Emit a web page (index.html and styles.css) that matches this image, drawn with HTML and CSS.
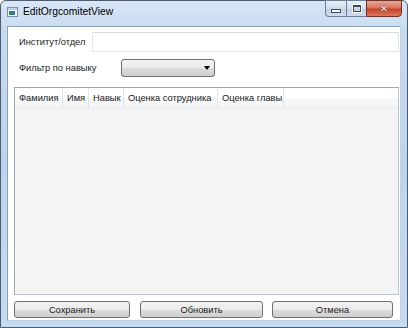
FILE: index.html
```html
<!DOCTYPE html>
<html>
<head>
<meta charset="utf-8">
<link rel="stylesheet" href="styles.css">
</head>
<body>
<div class="window">
  <div class="titlebar">
    <div class="app-icon">
      <svg width="11" height="10" viewBox="0 0 11 10">
        <rect x="0.5" y="0.5" width="10" height="9" fill="#f4f7fb" stroke="#7d8ea6"/>
        <rect x="1" y="1" width="9" height="2" fill="#bcd0ea"/>
        <rect x="2" y="4" width="3" height="4" fill="#2e8a56"/>
        <rect x="5" y="4" width="3" height="4" fill="#3b6fc0"/>
      </svg>
    </div>
    <div class="title">EditOrgcomitetView</div>
    <div class="caption-buttons">
      <div class="cbtn cmin"><span class="min-glyph"></span></div>
      <div class="cbtn cmax"><span class="max-glyph"></span></div>
      <div class="cbtn cclose"><span class="close-glyph">✕</span></div>
    </div>
  </div>
  <div class="client">
    <div class="row row-inst">
      <div class="label">Институт/отдел</div>
      <div class="textbox"></div>
    </div>
    <div class="row row-filter">
      <div class="label">Фильтр по навыку</div>
      <div class="combo"><span class="arrow"></span></div>
    </div>
    <div class="listview">
      <div class="header">
        <div class="col c1">Фамилия</div>
        <div class="col c2">Имя</div>
        <div class="col c3">Навык</div>
        <div class="col c4">Оценка сотрудника</div>
        <div class="col c5">Оценка главы</div>
        <div class="col cfill"></div>
      </div>
      <div class="list-body"></div>
    </div>
    <div class="buttons">
      <div class="btn b1">Сохранить</div>
      <div class="btn b2">Обновить</div>
      <div class="btn b3">Отмена</div>
    </div>
  </div>
</div>
</body>
</html>
```
FILE: styles.css
```css
html, body {
  margin: 0;
  padding: 0;
  width: 408px;
  height: 328px;
  overflow: hidden;
  background: #ffffff;
}
body {
  font-family: "Liberation Sans", Arial, sans-serif;
  font-size: 9.3px;
  color: #1a1a1a;
}
.window {
  width: 408px;
  height: 328px;
  box-sizing: border-box;
  border: 1px solid #4d5c6e;
  border-radius: 6px 6px 0 0;
  background: linear-gradient(180deg, #d9e7f6 0%, #c6daf0 10%, #bed4ee 50%, #c6daf1 100%);
  display: flex;
  flex-direction: column;
  padding: 0 6px 6px 6px;
}
.titlebar {
  height: 25px;
  display: flex;
  align-items: flex-start;
  position: relative;
}
.app-icon {
  margin-top: 6px;
  width: 11px;
  height: 10px;
}
.app-icon svg { display: block; }
.title {
  margin-left: 5px;
  margin-top: 5px;
  font-size: 10.3px;
  color: #000;
}
.caption-buttons {
  position: absolute;
  top: -1px;
  right: -1px;
  display: flex;
  height: 18px;
}
.cbtn {
  height: 17px;
  box-sizing: border-box;
  border: 1px solid #6f7f95;
  display: flex;
  align-items: center;
  justify-content: center;
}
.cmin {
  width: 21px;
  border-radius: 0 0 0 4px;
  background: linear-gradient(180deg, #e8eff8 0%, #d0dcec 50%, #bfcfe3 51%, #cfdcec 100%);
  border-right: none;
}
.cmax {
  width: 20px;
  background: linear-gradient(180deg, #e8eff8 0%, #d0dcec 50%, #bfcfe3 51%, #cfdcec 100%);
  border-right: none;
}
.cclose {
  width: 36px;
  border-radius: 0 0 4px 0;
  background: linear-gradient(180deg, #e9a99a 0%, #d8735e 45%, #c7442b 55%, #d8785e 100%);
  border-color: #6a3428;
}
.min-glyph {
  width: 8px;
  height: 2px;
  margin-top: 5px;
  background: #fff;
  border: 1px solid #3b4a5f;
}
.max-glyph {
  width: 6px;
  height: 4px;
  background: transparent;
  border: 1px solid #3b4a5f;
  border-top-width: 2px;
  box-shadow: 0 0 0 1px #fff;
}
.close-glyph {
  color: #fff;
  font-family: "DejaVu Sans", sans-serif;
  font-weight: bold;
  font-size: 10px;
  line-height: 10px;
  text-shadow: 0 0 1px #5a1a10, 0 0 1px #5a1a10;
}
.client {
  flex: 1;
  background: #ffffff;
  border: 1px solid #8899aa;
  border-color: #8fa1b7 #c3d1e2 #c3d1e2 #8fa1b7;
  display: flex;
  flex-direction: column;
}
.row {
  display: flex;
  align-items: center;
}
.label {
  padding-left: 11px;
  white-space: nowrap;
  flex-shrink: 0;
}
.row-inst {
  margin-top: 5px;
  height: 20px;
}
.row-inst .label { width: 73px; }
.textbox {
  flex: 1;
  height: 20px;
  box-sizing: border-box;
  border: 1px solid #e3e6ea;
  border-top-color: #d9dde3;
  border-radius: 1px;
  margin-right: 1px;
  background: #fff;
}
.row-filter {
  margin-top: 6px;
  height: 19px;
}
.row-filter .label { width: 102px; }
.combo {
  width: 94px;
  height: 18px;
  box-sizing: border-box;
  border: 1px solid #707070;
  border-radius: 3px;
  background: linear-gradient(180deg, #f3f3f3 0%, #ebebeb 50%, #dddddd 51%, #cfcfcf 100%);
  display: flex;
  align-items: center;
  justify-content: flex-end;
  padding-right: 4px;
}
.arrow {
  width: 0;
  height: 0;
  border-left: 3px solid transparent;
  border-right: 3px solid transparent;
  border-top: 4px solid #000;
}
.listview {
  margin: 10px 1px 0 6px;
  height: 208px;
  box-sizing: border-box;
  border: 1px solid #828790;
  border-color: #9aa9bd #b5c3d4 #b5c3d4 #9aa9bd;
  display: flex;
  flex-direction: column;
  background: #f4f4f4;
}
.header {
  display: flex;
  height: 20px;
  background: linear-gradient(180deg, #ffffff 0%, #ffffff 50%, #f7f8f9 51%, #f3f4f6 100%);
  border-bottom: 1px solid #eaecef;
}
.col {
  box-sizing: border-box;
  border-right: 1px solid #e3e5e9;
  padding-left: 4px;
  display: flex;
  align-items: center;
  white-space: nowrap;
  flex-shrink: 0;
  overflow: hidden;
}
.c1 { width: 48px; }
.c2 { width: 26px; }
.c3 { width: 35px; }
.c4 { width: 94px; }
.c5 { width: 66px; }
.cfill { flex: 1; border-right: none; }
.list-body {
  flex: 1;
  background: #f4f4f4;
}
.buttons {
  display: flex;
  margin: 6px 0 0 6px;
}
.btn {
  height: 17px;
  box-sizing: border-box;
  border: 1px solid #707070;
  border-radius: 3px;
  background: linear-gradient(180deg, #f2f2f2 0%, #ebebeb 50%, #dddddd 51%, #cfcfcf 100%);
  display: flex;
  align-items: center;
  justify-content: center;
}
.b1 { width: 116px; }
.b2 { width: 123px; margin-left: 10px; }
.b3 { width: 121px; margin-left: 9px; }
```
